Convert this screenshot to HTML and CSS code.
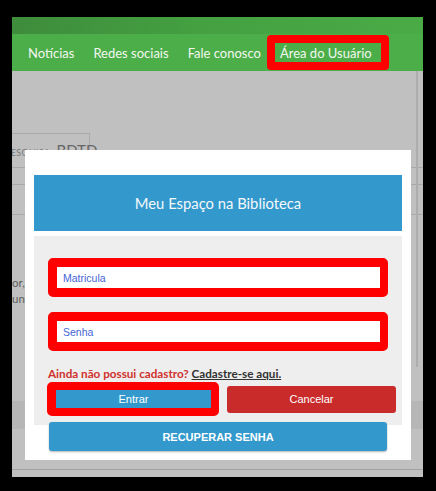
FILE: index.html
```html
<!DOCTYPE html>
<html lang="pt-BR">
<head>
<meta charset="utf-8">
<title>Meu Espaço na Biblioteca</title>
<link rel="stylesheet" href="styles.css">
</head>
<body>
<div class="frame">
  <div class="topbar"></div>
  <nav class="nav">
    <a class="nav-link">Notícias</a>
    <a class="nav-link">Redes sociais</a>
    <a class="nav-link">Fale conosco</a>
    <a class="nav-link nav-hl">Área do Usuário</a>
  </nav>
  <main class="page">
    <div class="tabrow"><div class="tab"><span class="tab-small">PESQUISA:</span> BDTD</div></div>
    <div class="rule rule-a"></div>
    <div class="rule rule-b"></div>
    <p class="bgtext">or, <span class="bgtext-o">e</span>xemplo de conteúdo<br>unto</p>
    <div class="band"></div>
    <div class="hline"></div>
    <div class="scroll"></div>

    <div class="modal">
      <div class="modal-head">Meu Espaço na Biblioteca</div>
      <form class="modal-body">
        <div class="field"><input class="input" type="text" placeholder="Matricula"></div>
        <div class="field field-2"><input class="input" type="password" placeholder="Senha"></div>
        <p class="signup">Ainda não possui cadastro? <a class="signup-link">Cadastre-se aqui.</a></p>
        <div class="actions">
          <div class="mark"><button type="button" class="btn btn-blue">Entrar</button></div>
          <button type="button" class="btn btn-red">Cancelar</button>
        </div>
      </form>
      <button type="button" class="btn-recover">RECUPERAR SENHA</button>
    </div>
  </main>
</div>
</body>
</html>
```

FILE: styles.css
```css
* { box-sizing: border-box; }
html, body { margin: 0; padding: 0; }
body {
  background: #000;
  width: 436px;
  height: 491px;
  overflow: hidden;
  font-family: Lato, "Liberation Sans", sans-serif;
}
.frame {
  margin: 17px 0 0 12px;
  width: 411px;
  height: 460px;
  display: flex;
  flex-direction: column;
  overflow: hidden;
}
.topbar {
  height: 17px;
  background: linear-gradient(90deg, #3e8c3c 0%, #44a041 45%, #4aab46 100%);
}
.nav {
  height: 37px;
  background: #4cae48;
  display: flex;
  align-items: center;
  padding-left: 16px;
  gap: 19px;
  font-size: 13px;
  color: #f3f6f1;
}
.nav-link { white-space: nowrap; }
.nav-hl {
  display: flex;
  align-items: center;
  height: 35px;
  border: 8px solid #ff0000;
  border-radius: 4px;
  padding: 0 9px 0 5px;
  margin-left: -13px;
}
.page {
  flex: 1;
  position: relative;
  background: #c0c0c0;
  overflow: hidden;
}
.tabrow {
  margin-top: 62px;
  height: 35px;
  border-bottom: 1px solid #a9a9a9;
}
.tab {
  width: 78px;
  height: 100%;
  border-top: 1px solid #a9a9a9;
  border-right: 1px solid #a9a9a9;
  padding-top: 7px;
  text-indent: -7px;
  white-space: nowrap;
  color: #666;
  font-size: 15px;
}
.tab-small { font-size: 9px; letter-spacing: 0.3px; color: #7a7a7a; }
.rule { border-bottom: 1px solid #a9a9a9; }
.rule-a { height: 17px; }
.rule-b { height: 30px; }
.bgtext {
  margin: 60px 0 0 0;
  font-size: 11.5px;
  line-height: 16px;
  color: #5e5e5e;
  white-space: nowrap;
}
.bgtext-o { color: #c89a6a; }
.band {
  margin-top: 94px;
  height: 28px;
  background: #b6b6b6;
}
.hline {
  margin-top: 40px;
  height: 1px;
  background: #a3a3a3;
}
.scroll {
  position: absolute;
  right: 5px;
  top: 0;
  width: 2px;
  height: 296px;
  background: #adadad;
}
.modal {
  position: absolute;
  left: 13px;
  top: 79px;
  width: 386px;
  height: 310px;
  background: #fff;
  padding: 25px 9px 9px;
  display: flex;
  flex-direction: column;
}
.modal-head {
  height: 56px;
  background: #3399cc;
  color: #f4f8fb;
  font-size: 14.8px;
  display: flex;
  align-items: center;
  justify-content: center;
}
.modal-body {
  margin: 5px 0 0;
  height: 189px;
  background: #eeeeee;
  padding: 22px 14px 9px;
  display: flex;
  flex-direction: column;
}
.field {
  height: 39px;
  border: 9px solid #ff0000;
  border-right-width: 8px;
  border-radius: 5px;
  background: #fff;
}
.field-2 { margin-top: 15px; }
.input {
  display: block;
  width: 100%;
  height: 21px;
  border: 0;
  padding: 0 6px;
  margin: 0;
  background: #fff;
  font-family: "Liberation Sans", Arial, sans-serif;
  font-size: 10.5px;
  color: #333;
  outline: none;
}
.input::placeholder { color: #3f66d4; }
.signup {
  margin: 15px 0 0;
  height: 14px;
  line-height: 14px;
  font-size: 11.7px;
  font-weight: 700;
  color: #d0312d;
  white-space: nowrap;
}
.signup-link { color: #333; text-decoration: underline; }
.actions {
  margin: 2px -8px 0 -1px;
  display: flex;
  align-items: center;
  gap: 8px;
}
.mark {
  flex: none;
  width: 172px;
  height: 34px;
  border: 8px solid #ff0000;
  border-left-width: 9px;
  border-radius: 5px;
  background: #3399cc;
}
.btn {
  font-family: "Liberation Sans", Arial, sans-serif;
  font-size: 11px;
  color: #fff;
  border: 0;
  margin: 0;
  padding: 0;
}
.btn-blue {
  display: block;
  width: 100%;
  height: 100%;
  background: #3399cc;
}
.btn-red {
  flex: none;
  width: 169px;
  height: 27px;
  background: #c92b2b;
  border-radius: 3px;
}
.btn-recover {
  margin: -3px 0 0 15px;
  width: 338px;
  height: 29px;
  border: 0;
  border-radius: 3px;
  background: #3399cc;
  box-shadow: 0 1px 2px rgba(0, 0, 0, 0.3);
  color: #fff;
  font-family: "Liberation Sans", Arial, sans-serif;
  font-size: 11px;
  font-weight: 700;
  position: relative;
}
```
